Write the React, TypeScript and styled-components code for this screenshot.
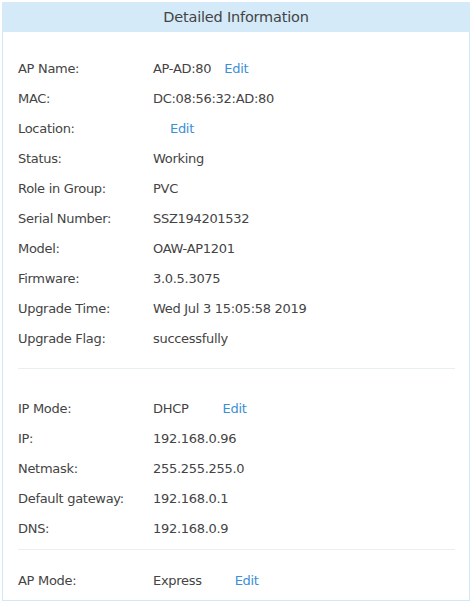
import styled, { createGlobalStyle } from "styled-components";

const Global = createGlobalStyle`
  body {
    margin: 0;
    background: #fff;
    font-family: Tahoma, "DejaVu Sans", "Liberation Sans", sans-serif;
  }
`;

const Panel = styled.div`
  margin: 2px 2px 0 2px;
  width: 468px;
  height: 599px;
  box-sizing: border-box;
  border: 1px solid #cfe7f6;
  border-top: none;
  display: flex;
  flex-direction: column;
`;

const Title = styled.div`
  height: 30px;
  background: #d4eaf8;
  color: #444;
  font-size: 14.5px;
  font-family: "DejaVu Sans", sans-serif;
  letter-spacing: -0.2px;
  display: flex;
  align-items: center;
  justify-content: center;
  margin: 0 -1px;
`;

const Section = styled.div<{ $top: number; $bottom: number }>`
  padding: ${(p) => p.$top}px 0 ${(p) => p.$bottom}px;
  margin: 0 14px 0 15px;
`;

const Divider = styled.div`
  height: 1px;
  background: #e9eef1;
  margin: 0 14px 0 15px;
`;

const Row = styled.div`
  height: 30px;
  display: flex;
  align-items: center;
  font-size: 13px;
  font-family: "DejaVu Sans", sans-serif;
  color: #444;
  letter-spacing: -0.3px;
`;

const Label = styled.span`
  width: 135px;
  flex-shrink: 0;
`;

const Value = styled.span``;

const EditLink = styled.a<{ $gap: number }>`
  color: #3a8fd6;
  margin-left: ${(p) => p.$gap}px;
  cursor: pointer;
`;

type Item = { label: string; value: string; edit?: number };

const general: Item[] = [
  { label: "AP Name:", value: "AP-AD:80", edit: 13 },
  { label: "MAC:", value: "DC:08:56:32:AD:80" },
  { label: "Location:", value: "", edit: 17 },
  { label: "Status:", value: "Working" },
  { label: "Role in Group:", value: "PVC" },
  { label: "Serial Number:", value: "SSZ194201532" },
  { label: "Model:", value: "OAW-AP1201" },
  { label: "Firmware:", value: "3.0.5.3075" },
  { label: "Upgrade Time:", value: "Wed Jul 3 15:05:58 2019" },
  { label: "Upgrade Flag:", value: "successfully" },
];

const network: Item[] = [
  { label: "IP Mode:", value: "DHCP", edit: 34 },
  { label: "IP:", value: "192.168.0.96" },
  { label: "Netmask:", value: "255.255.255.0" },
  { label: "Default gateway:", value: "192.168.0.1" },
  { label: "DNS:", value: "192.168.0.9" },
];

const mode: Item[] = [{ label: "AP Mode:", value: "Express", edit: 33 }];

function Rows({ items }: { items: Item[] }) {
  return (
    <>
      {items.map((it) => (
        <Row key={it.label}>
          <Label>{it.label}</Label>
          <Value>{it.value}</Value>
          {it.edit !== undefined && <EditLink $gap={it.edit}>Edit</EditLink>}
        </Row>
      ))}
    </>
  );
}

export default function App() {
  return (
    <>
      <Global />
      <Panel>
        <Title>Detailed Information</Title>
        <Section $top={21} $bottom={15}>
          <Rows items={general} />
        </Section>
        <Divider />
        <Section $top={24} $bottom={6}>
          <Rows items={network} />
        </Section>
        <Divider />
        <Section $top={15} $bottom={0}>
          <Rows items={mode} />
        </Section>
      </Panel>
    </>
  );
}
